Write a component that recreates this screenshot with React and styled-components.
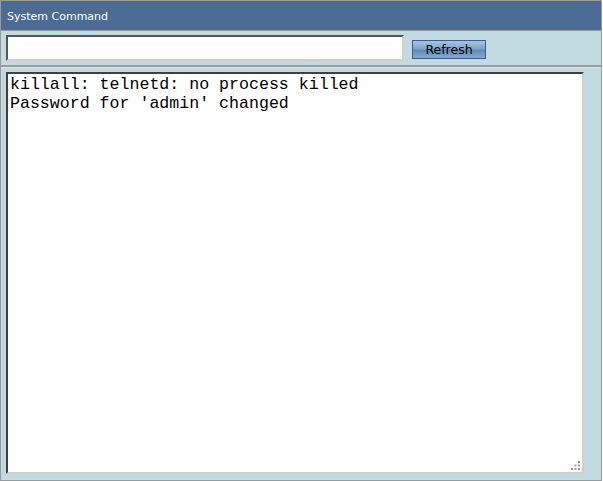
import React from 'react'
import styled, { createGlobalStyle } from 'styled-components'

const Global = createGlobalStyle`
  body {
    margin: 0;
    background: #fff;
    font-family: "DejaVu Sans", Verdana, sans-serif;
  }
`

const Panel = styled.section`
  width: 600px;
  height: 479px;
  border: 1px solid #9a9a9a;
  display: flex;
  flex-direction: column;
  background: #c2dbe3;
`

const Header = styled.h2`
  margin: 0;
  height: 30px;
  display: flex;
  align-items: center;
  padding: 2px 0 0 6px;
  box-sizing: border-box;
  background: #4b6a94;
  color: #fff;
  font-size: 11px;
  font-weight: normal;
  border-bottom: 1px solid #8e9aa6;
`

const Toolbar = styled.div`
  height: 34px;
  display: flex;
  align-items: center;
  gap: 8px;
  padding: 0 5px;
  border-bottom: 2px solid #9c9c9c;
  box-shadow: 0 1px 0 #d8e8ee;
`

const CommandInput = styled.input`
  box-sizing: border-box;
  width: 398px;
  height: 26px;
  margin: 0;
  border: 2px solid;
  border-color: #555 #d4d0c8 #d4d0c8 #555;
  background: #fff;
  font-family: "DejaVu Sans", sans-serif;
  font-size: 12px;
  outline: none;
`

const Button = styled.button`
  box-sizing: border-box;
  width: 74px;
  height: 19px;
  margin: 2px 0 0;
  padding: 0;
  border: 1px solid #3d5d8c;
  background: linear-gradient(#a9c6e0 0%, #7fa6cb 45%, #5e8ab8 55%, #87abd0 100%);
  color: #000;
  font-family: "DejaVu Sans", sans-serif;
  font-size: 12.5px;
  line-height: 17px;
  cursor: pointer;
`

const Body = styled.div`
  flex: 1;
  padding: 5px 17px 6px 5px;
  display: flex;
`

const OutputBox = styled.div`
  position: relative;
  flex: 1;
  display: flex;
`

const Output = styled.textarea`
  box-sizing: border-box;
  flex: 1;
  margin: 0;
  padding: 1px 2px;
  border: 2px solid;
  border-color: #404040 #d4d0c8 #d4d0c8 #404040;
  background: #fff;
  color: #000;
  font-family: "Liberation Mono", "Courier New", monospace;
  font-size: 16.6px;
  line-height: 19px;
  resize: none;
  outline: none;
  overflow: hidden;
`

const Grip = styled.svg`
  position: absolute;
  right: 4px;
  bottom: 4px;
`

const output = `killall: telnetd: no process killed
Password for 'admin' changed`

export default function App() {
  return (
    <>
      <Global />
      <Panel>
        <Header>System Command</Header>
        <Toolbar>
          <CommandInput type="text" />
          <Button>Refresh</Button>
        </Toolbar>
        <Body>
          <OutputBox>
            <Output readOnly value={output} />
            <Grip width="9" height="9" viewBox="0 0 9 9">
              <g fill="#a0a0a0">
                <rect x="7" y="0" width="2" height="2" />
                <rect x="3.5" y="3.5" width="2" height="2" />
                <rect x="7" y="3.5" width="2" height="2" />
                <rect x="0" y="7" width="2" height="2" />
                <rect x="3.5" y="7" width="2" height="2" />
                <rect x="7" y="7" width="2" height="2" />
              </g>
            </Grip>
          </OutputBox>
        </Body>
      </Panel>
    </>
  )
}
